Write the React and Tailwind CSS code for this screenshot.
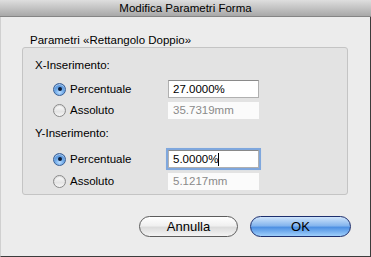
import React from "react";

const font = { fontFamily: '"Liberation Sans", Arial, sans-serif' };

function Radio({ checked }) {
  if (checked) {
    return (
      <div className="w-[13px] h-[13px] rounded-full border border-[#3a5f95] bg-[radial-gradient(circle_at_50%_75%,#b9dcff_0%,#6aa6e6_45%,#3d7cc9_100%)] flex items-center justify-center shadow-[inset_0_1px_1px_rgba(255,255,255,0.6)]">
        <div className="w-[4px] h-[4px] rounded-full bg-[#0b1a35]" />
      </div>
    );
  }
  return (
    <div className="w-[13px] h-[13px] rounded-full border border-[#8a8a8a] bg-[linear-gradient(#ffffff,#e4e4e4_60%,#f7f7f7)] shadow-[inset_0_1px_1px_rgba(0,0,0,0.15)]" />
  );
}

function Row({ checked, label, value, focused, disabled }) {
  return (
    <div className="flex items-center h-[18px] ml-[18px]">
      <div className="w-[115px] flex items-center gap-[4px]">
        <Radio checked={checked} />
        <span className="text-[11.5px] leading-[14px] text-black">{label}</span>
      </div>
      {disabled ? (
        <div className="w-[91px] h-[17px] bg-[#fbfbfb] pl-[5px] flex items-center text-[11.5px] leading-[14px] text-[#8a8a8a]">
          {value}
        </div>
      ) : (
        <div
          className={
            "w-[91px] h-[18px] bg-white pl-[4px] flex items-center text-[11.5px] leading-[14px] text-black border border-[#b0b0b0] border-t-[#8a8a8a] " +
            (focused ? "outline outline-[2px] outline-[#7fa7dd] shadow-[0_0_2px_1px_#9fc0ea]" : "")
          }
        >
          <span>{value}</span>
          {focused && <span className="w-[1px] h-[13px] bg-black" />}
        </div>
      )}
    </div>
  );
}

export default function App() {
  return (
    <div style={font} className="w-[371px] h-[257px] flex flex-col select-none">
      <div className="h-[17px] shrink-0 bg-[linear-gradient(#dedede,#a8a8a8)] border-b border-[#858585] flex items-center justify-center">
        <span className="text-[11.5px] leading-[14px] text-black">Modifica Parametri Forma</span>
      </div>
      <div className="flex-1 bg-[#ececec] border-r border-b border-[#3c3c3c] border-l border-l-[#d0d0d0] flex flex-col pt-[16px] pl-[21px] pr-[21px]">
        <div className="h-[14px] ml-[8px] text-[11.5px] leading-[14px] text-black">
          Parametri «Rettangolo Doppio»
        </div>
        <div className="h-[148px] w-[326px] rounded-[3px] border border-[#c4c4c4] bg-[#e3e3e3] flex flex-col pl-[12px] pt-[10px]">
          <div className="h-[14px] text-[11.5px] leading-[14px] text-black">X-Inserimento:</div>
          <div className="mt-[8px]">
            <Row checked label="Percentuale" value="27.0000%" />
          </div>
          <div className="mt-[3px]">
            <Row label="Assoluto" value="35.7319mm" disabled />
          </div>
          <div className="mt-[7px] h-[14px] text-[11.5px] leading-[14px] text-black">Y-Inserimento:</div>
          <div className="mt-[10px]">
            <Row checked label="Percentuale" value="5.0000%" focused />
          </div>
          <div className="mt-[4px]">
            <Row label="Assoluto" value="5.1217mm" disabled />
          </div>
        </div>
        <div className="flex justify-end gap-[12px] mt-[21px]">
          <button className="w-[99px] h-[21px] rounded-full border border-[#5c5c5c] bg-[linear-gradient(#ffffff,#f0f0f0_45%,#dcdcdc_55%,#f4f4f4)] text-[13px] leading-[15px] text-black flex items-center justify-center">
            Annulla
          </button>
          <button className="w-[101px] h-[21px] mr-[-2px] rounded-full border border-[#1d2f6e] bg-[linear-gradient(#cfe4fb,#86b6ee_45%,#4f91e3_55%,#9fcffb)] text-[13px] leading-[15px] text-black flex items-center justify-center">
            OK
          </button>
        </div>
      </div>
    </div>
  );
}
